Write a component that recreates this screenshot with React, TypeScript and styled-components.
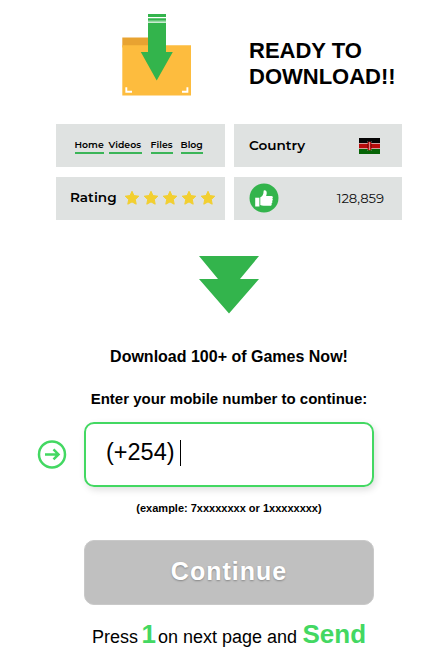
import React from "react";
import styled, { createGlobalStyle } from "styled-components";

const GlobalStyle = createGlobalStyle`
  * { box-sizing: border-box; }
  body {
    margin: 0;
    background: #fff;
    color: #000;
    font-family: "Liberation Sans", Arial, sans-serif;
    overflow: hidden;
  }
`;

const Page = styled.main`
  width: 346px;
  height: 657px;
  margin-left: 56px;
  padding-top: 14px;
  display: flex;
  flex-direction: column;
  align-items: center;
`;

const Hero = styled.header`
  width: 100%;
  height: 110.3px;
  padding-left: 66px;
  display: flex;
  align-items: flex-start;
  gap: 57px;
`;

const FolderIcon = styled.svg`
  width: 70px;
  height: 83px;
  flex: none;
`;

const Title = styled.h1`
  margin: 24px 0 0;
  font-size: 22px;
  line-height: 26px;
  font-weight: 700;
  white-space: nowrap;
`;

const Panels = styled.section`
  width: 346px;
  display: grid;
  grid-template-columns: 168.5px 168.5px;
  grid-template-rows: 43px 43px;
  gap: 9.5px 9px;
  font-family: Montserrat, Inter, sans-serif;
`;

const Panel = styled.div<{ $left: number; $right: number }>`
  padding: 0 ${(p) => p.$right}px 0 ${(p) => p.$left}px;
  display: flex;
  align-items: center;
  justify-content: space-between;
  background: #dfe2e1;
`;

const Nav = styled.nav`
  display: grid;
  grid-template-columns: 29px 33px 22px 22px;
  column-gap: 5px;
  padding-bottom: 1px;

  & > :nth-child(3) { margin-left: 4px; margin-right: -4px; }
  & > :nth-child(4) { margin-left: 7px; margin-right: -7px; }
`;

const NavItem = styled.span`
  height: 17px;
  border-bottom: 2px solid #3bb558;
  font-size: 9.3px;
  line-height: 16px;
  font-weight: 600;
  white-space: nowrap;
`;

const Label = styled.span<{ $top?: number }>`
  margin-top: ${(p) => p.$top ?? 0}px;
  font-size: 13.6px;
  line-height: 18px;
  font-weight: 600;
`;

const Stars = styled.span`
  display: flex;
  gap: 3px;
`;

const Count = styled.span`
  font-size: 13.2px;
  letter-spacing: -0.05px;
  color: #111;
`;

const Svg = styled.svg`
  display: block;
  flex: none;
`;

const Chevrons = styled(Svg)`
  margin-top: 36px;
`;

const Line = styled.p<{ $size: number; $top: number }>`
  margin: ${(p) => p.$top}px 0 0;
  font-size: ${(p) => p.$size}px;
  line-height: 20px;
  font-weight: 700;
  white-space: nowrap;
`;

const Entry = styled.div`
  align-self: flex-start;
  margin: 13px 0 0 -19px;
  display: flex;
  align-items: center;
  gap: 17px;
`;

const Field = styled.div`
  width: 290px;
  height: 65px;
  padding: 0 20px 3px;
  display: flex;
  align-items: center;
  border: 2px solid #43d862;
  border-radius: 10px;
  box-shadow: 2px 3px 7px rgba(0, 0, 0, 0.13);
  font-size: 23.5px;
`;

const Caret = styled.span`
  width: 1px;
  height: 26px;
  margin-left: 5.4px;
  background: #000;
`;

const Button = styled.button`
  width: 290px;
  height: 65px;
  margin-top: 22px;
  padding: 0 0 2px;
  border: 1px solid #c9c9c9;
  border-radius: 10px;
  background: #c0c0c0;
  color: #fff;
  font: 700 25px "Liberation Sans", Arial, sans-serif;
  letter-spacing: 1px;
  text-shadow: 0 1px 2px rgba(0, 0, 0, 0.3);
`;

const Footer = styled.p`
  margin: 14px 0 0;
  display: flex;
  align-items: baseline;
  font-size: 18px;
  line-height: 30px;
  white-space: nowrap;
`;

const Accent = styled.strong<{ $before: number; $after?: number }>`
  margin: 0 ${(p) => p.$after ?? 0}px 0 ${(p) => p.$before}px;
  font-size: 26px;
  color: #43d862;
`;

const Star = () => (
  <Svg width="16" height="16" viewBox="0 0 16 16">
    <path
      d="M8 1.3 10 5.6 14.8 6.2 11.3 9.5 12.2 14.2 8 11.9 3.8 14.2 4.7 9.5 1.2 6.2 6 5.6Z"
      fill="#f2cf30" stroke="#f2cf30" strokeWidth="1" strokeLinejoin="round"
    />
  </Svg>
);

const KenyaFlag = () => (
  <Svg width="21" height="16" viewBox="0 0 21 16">
    <path d="M0 0h21v5H0z" fill="#050505" />
    <path d="M0 5h21v6H0z" fill="#ddd" />
    <path d="M0 5.7h21v4.6H0z" fill="#b80b0b" />
    <path d="M0 11h21v5H0z" fill="#066406" />
    <path d="m8.4 3 4.2 10M12.6 3 8.4 13" stroke="#999" strokeWidth=".5" />
    <ellipse cx="10.5" cy="8" rx="2.2" ry="4.5" fill="#c51515" />
    <path d="M8.7 6q.7 2 0 4M12.3 6q-.7 2 0 4" fill="none" stroke="#300" strokeWidth=".6" />
    <path d="M10.5 4v8" stroke="#e9a0a0" strokeWidth=".8" />
  </Svg>
);

export default function App() {
  return (
    <>
      <GlobalStyle />
      <Page>
        <Hero>
          <FolderIcon viewBox="0 0 70 83">
            <path d="M.3 23.5H28v10H.3z" fill="#e8a331" />
            <path d="M.3 31.3H69v50.2H.3z" fill="#fdbc3e" />
            <path d="M26 9h18v29h6.8L34.7 66.5 18.8 38H26z" fill="#33b44c" />
            <path d="M26 0h18v3H26zM26 4.3h18v2.4H26zM26 7.4h18v.8H26z" fill="#33b44c" />
            <path d="M4.3 73.2v4.6H10M65.4 73.2v4.6H60" fill="none" stroke="#fff" strokeWidth="1.9" />
          </FolderIcon>
          <Title>READY TO<br />DOWNLOAD!!</Title>
        </Hero>

        <Panels>
          <Panel $left={18.6} $right={0}>
            <Nav>
              <NavItem>Home</NavItem>
              <NavItem>Videos</NavItem>
              <NavItem>Files</NavItem>
              <NavItem>Blog</NavItem>
            </Nav>
          </Panel>
          <Panel $left={15.5} $right={22}>
            <Label $top={-1}>Country</Label>
            <KenyaFlag />
          </Panel>
          <Panel $left={14} $right={9}>
            <Label $top={-2}>Rating</Label>
            <Stars>
              <Star /><Star /><Star /><Star /><Star />
            </Stars>
          </Panel>
          <Panel $left={15} $right={18}>
            <Svg width="30" height="30" viewBox="0 0 30 30">
              <circle cx="15" cy="15" r="14.5" fill="#33b44c" />
              <path d="M6.2 14.7h4.2v8.8H6.2z" fill="#fff" />
              <path d="M11.3 14.3c2-.9 3.3-2.7 3.3-6 0-1.5 3-1.5 3.1 1.3.1 1.3-.3 2.6-.6 3.4h5.2c1.8 0 2 2.1.9 2.6 1 .6.8 2.1-.2 2.5.8.7.4 2-.5 2.3.6.8.1 2.4-1.4 2.4h-6.5c-1.3 0-2.3-.5-3.3-.7z" fill="#fff" />
            </Svg>
            <Count>128,859</Count>
          </Panel>
        </Panels>

        <Chevrons width="60" height="58" viewBox="0 0 60 58">
          <path d="M0 0h60L41 23h19L30 57.5 0 23h19z" fill="#33b44c" />
        </Chevrons>

        <Line $size={16} $top={33}>Download 100+ of Games Now!</Line>
        <Line $size={15} $top={22}>Enter your mobile number to continue:</Line>

        <Entry>
          <Svg width="30" height="30" viewBox="0 0 30 30" fill="none" stroke="#43d862" strokeWidth="2.5">
            <circle cx="15" cy="15.4" r="13" />
            <path d="M8 15.4h13M16.5 10.4l5 5-5 5" />
          </Svg>
          <Field>(+254) <Caret /></Field>
        </Entry>

        <Line $size={11} $top={11}>(example: 7xxxxxxxx or 1xxxxxxxx)</Line>
        <Button>Continue</Button>
        <Footer>
          <span>Press</span>
          <Accent $before={3.5} $after={2}>1</Accent>
          <span>on next page and</span>
          <Accent $before={5.5}>Send</Accent>
        </Footer>
      </Page>
    </>
  );
}
